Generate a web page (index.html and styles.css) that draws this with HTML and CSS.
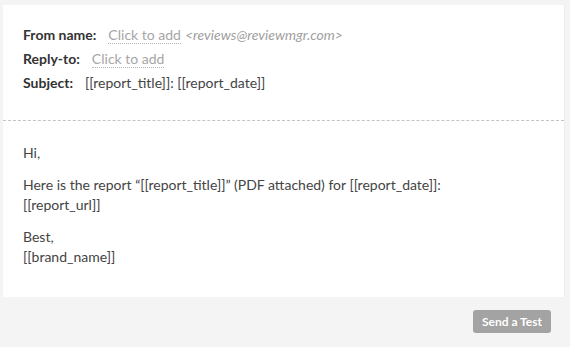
FILE: index.html
```html
<!DOCTYPE html>
<html lang="en">
<head>
  <meta charset="UTF-8" />
  <title>Email template</title>
  <link rel="stylesheet" href="styles.css">
</head>
<body>

<div class="panel">
  <div class="headers">
    <div class="row">
      <span class="label">From name:</span>
      <span class="add">Click to add</span>
      <span class="email">&lt;reviews@reviewmgr.com&gt;</span>
    </div>
    <div class="row">
      <span class="label">Reply-to:</span>
      <span class="add">Click to add</span>
    </div>
    <div class="row">
      <span class="label">Subject:</span>
      <span class="value">[[report_title]]: [[report_date]]</span>
    </div>
  </div>

  <div class="message">
    <p>Hi,</p>
    <p>Here is the report “[[report_title]]” (PDF attached) for [[report_date]]:<br>[[report_url]]</p>
    <p>Best,<br>[[brand_name]]</p>
  </div>
</div>

<div class="actions">
  <button class="test-btn">Send a Test</button>
</div>

</body>
</html>
```

FILE: styles.css
```css
* { box-sizing: border-box; }
body {
  margin: 0;
  font-family: 'Lato', 'Liberation Sans', sans-serif;
  font-size: 14px;
  background: #f4f4f4;
  color: #333;
}

.panel {
  margin: 5px 5px 0 3px;
  background: #fff;
  border-right: 1px solid #ececec;
}

.headers {
  padding: 18px 20px 25px;
  border-bottom: 1px dashed #c4c4c4;
}
.row {
  display: flex;
  align-items: baseline;
  line-height: 24px;
}
.label {
  font-weight: bold;
  color: #333;
  margin-right: 12px;
}
.add {
  color: #a6a6a6;
  border-bottom: 1px dotted #b5b5b5;
  line-height: 16px;
}
.email {
  margin-left: 4px;
  font-style: italic;
  font-size: 14px;
  color: #a0a0a0;
}
.value { color: #444; }

.message {
  padding: 22px 20px 30px;
  color: #444;
  line-height: 20px;
}
.message p { margin: 0 0 12px; }
.message p:last-child { margin-bottom: 0; }

.actions {
  display: flex;
  justify-content: flex-end;
  padding: 13px 19px 0 0;
}
.test-btn {
  background: #a3a3a3;
  color: #fff;
  font-family: inherit;
  font-weight: bold;
  font-size: 12px;
  width: 78px;
  height: 23px;
  border: none;
  border-radius: 3px;
  padding: 0;
  cursor: pointer;
}
```
